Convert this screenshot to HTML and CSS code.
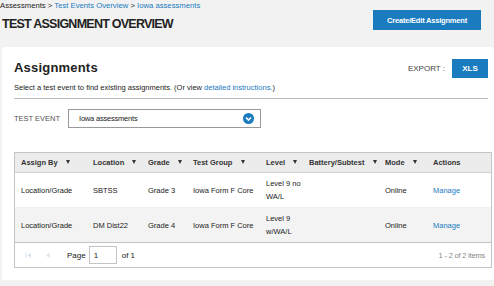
FILE: index.html
```html
<!DOCTYPE html>
<html lang="en">
<head>
    <meta charset="UTF-8">
    <title>Test Assignment Overview</title>
    <link rel="stylesheet" href="styles.css">
</head>
<body>
    <div class="page-head">
        <div>
            <div class="crumbs">Assessments &gt; <a href="#">Test Events Overview</a> &gt; <a href="#">Iowa assessments</a></div>
            <h1>TEST ASSIGNMENT OVERVIEW</h1>
        </div>
        <button class="btn btn-create">Create/Edit Assignment</button>
    </div>

    <div class="card">
        <div class="card-top">
            <h2>Assignments</h2>
            <div class="export">
                <span>EXPORT :</span>
                <button class="btn btn-xls">XLS</button>
            </div>
        </div>
        <p class="hint">Select a test event to find existing assignments. (Or view <a href="#">detailed instructions.</a>)</p>

        <div class="event-row">
            <label>TEST EVENT</label>
            <div class="select">
                <span>Iowa assessments</span>
                <svg width="11" height="11" viewBox="0 0 11 11"><circle cx="5.5" cy="5.5" r="5.5" fill="#1a7bbf"/><path d="M3 4.5 L5.5 7 L8 4.5" stroke="#fff" stroke-width="1.6" fill="none"/></svg>
            </div>
        </div>

        <div class="grid">
            <table>
                <thead>
                    <tr>
                        <th class="c1">Assign By <i class="sort"></i></th>
                        <th class="c2">Location <i class="sort"></i></th>
                        <th class="c3">Grade <i class="sort"></i></th>
                        <th class="c4">Test Group <i class="sort"></i></th>
                        <th class="c5">Level <i class="sort"></i></th>
                        <th class="c6">Battery/Subtest <i class="sort"></i></th>
                        <th class="c7">Mode <i class="sort"></i></th>
                        <th class="c8">Actions</th>
                    </tr>
                </thead>
                <tbody>
                    <tr>
                        <td>Location/Grade</td>
                        <td>SBTSS</td>
                        <td>Grade 3</td>
                        <td>Iowa Form F Core</td>
                        <td>Level 9 no<br>WA/L</td>
                        <td></td>
                        <td>Online</td>
                        <td><a href="#">Manage</a></td>
                    </tr>
                    <tr class="alt">
                        <td>Location/Grade</td>
                        <td>DM Dist22</td>
                        <td>Grade 4</td>
                        <td>Iowa Form F Core</td>
                        <td>Level 9<br>w/WA/L</td>
                        <td></td>
                        <td>Online</td>
                        <td><a href="#">Manage</a></td>
                    </tr>
                </tbody>
            </table>
            <div class="pager">
                <div class="pager-left">
                    <svg width="7" height="7" viewBox="0 0 7 7"><rect x="0.5" y="1" width="1" height="5" fill="#d6e2ee"/><path d="M6 1 L2.5 3.5 L6 6 Z" fill="#d6e2ee"/></svg>
                    <svg class="prev" width="6" height="7" viewBox="0 0 6 7"><path d="M4.5 1 L1 3.5 L4.5 6 Z" fill="#d6e2ee"/></svg>
                    <span class="page-lbl">Page</span>
                    <span class="page-box">1</span>
                    <span>of 1</span>
                </div>
                <span class="items">1 - 2 of 2 items</span>
            </div>
        </div>
    </div>
</body>
</html>
```

FILE: styles.css
```css
body {
    margin: 0;
    padding: 0 2px;
    font-family: "Liberation Sans", Arial, sans-serif;
    background-color: #f2f2f2;
    color: #222;
    font-size: 8px;
}

a {
    color: #1a7bbf;
    text-decoration: none;
}

.page-head {
    display: flex;
    justify-content: space-between;
    align-items: flex-start;
    padding: 1px 11px 0 0;
    height: 46px;
}

.crumbs {
    margin-left: -2px;
    font-size: 7.7px;
    line-height: 9px;
}

h1 {
    margin: 7px 0 0;
    font-size: 12.5px;
    font-weight: bold;
    letter-spacing: -0.75px;
    color: #222;
}

.btn {
    background-color: #1a7bbf;
    color: #fff;
    border: none;
    font-family: inherit;
    font-weight: bold;
    font-size: 7.5px;
    cursor: pointer;
}

.btn-create {
    margin-top: 9px;
    width: 108px;
    height: 20px;
    letter-spacing: -0.2px;
}

.card {
    background: #fff;
    border-radius: 3px;
    padding: 12px 2px 12px 12px;
    margin-right: -2px;
}

.card-top {
    display: flex;
    justify-content: space-between;
    align-items: flex-start;
    padding-right: 4px;
}

h2 {
    margin: 1px 0 0;
    font-size: 13px;
    font-weight: bold;
    letter-spacing: 0.2px;
}

.export {
    display: flex;
    align-items: center;
    gap: 7px;
    color: #444;
    font-size: 8px;
}

.btn-xls {
    width: 36px;
    height: 19px;
    font-size: 8px;
}

.hint {
    margin: 5px 4px 0 0;
    padding-bottom: 6px;
    border-bottom: 1px solid #bdbdbd;
    font-size: 7.5px;
}

.event-row {
    display: flex;
    align-items: center;
    margin-top: 10px;
}

.event-row label {
    width: 54px;
    color: #555;
    font-size: 7.5px;
}

.select {
    display: flex;
    justify-content: space-between;
    align-items: center;
    width: 175px;
    height: 17px;
    padding: 0 6px 0 10px;
    border: 1px solid #999;
    font-size: 7.5px;
    letter-spacing: -0.2px;
}

.grid {
    margin-top: 24px;
    border: 1px solid #c4c4c4;
}

table {
    width: 100%;
    border-collapse: collapse;
    font-size: 7.5px;
}

th {
    background: #ececec;
    text-align: left;
    height: 19px;
    padding: 0 0 0 6px;
    font-weight: bold;
    color: #333;
    border-bottom: 1px solid #d0d0d0;
    white-space: nowrap;
}

td {
    height: 34px;
    padding: 0 0 0 6px;
    line-height: 13px;
    color: #222;
}

tr.alt td {
    background: #f3f3f3;
    border-top: 1px solid #f0f0f0;
}

.c1 { width: 66px; }
.c2 { width: 49px; }
.c3 { width: 39px; }
.c4 { width: 67px; }
.c5 { width: 37px; }
.c6 { width: 70px; }
.c7 { width: 42px; }

.sort {
    display: inline-block;
    width: 0;
    height: 0;
    margin-left: 6px;
    border-left: 2.5px solid transparent;
    border-right: 2.5px solid transparent;
    border-top: 4px solid #333;
    vertical-align: 1px;
}

.pager {
    display: flex;
    justify-content: space-between;
    align-items: center;
    height: 24px;
    padding: 0 6px 0 10px;
    border-top: 1px solid #c4c4c4;
    font-size: 8px;
}

.pager-left {
    display: flex;
    align-items: center;
}

.prev {
    margin-left: 13px;
}

.page-lbl {
    margin-left: 16px;
}

.page-box {
    width: 22px;
    height: 16px;
    line-height: 17px;
    margin: 0 5px 0 3px;
    padding-left: 4px;
    border: 1px solid #c4c4c4;
}

.items {
    color: #888;
    font-size: 7.5px;
    letter-spacing: -0.2px;
}
```
